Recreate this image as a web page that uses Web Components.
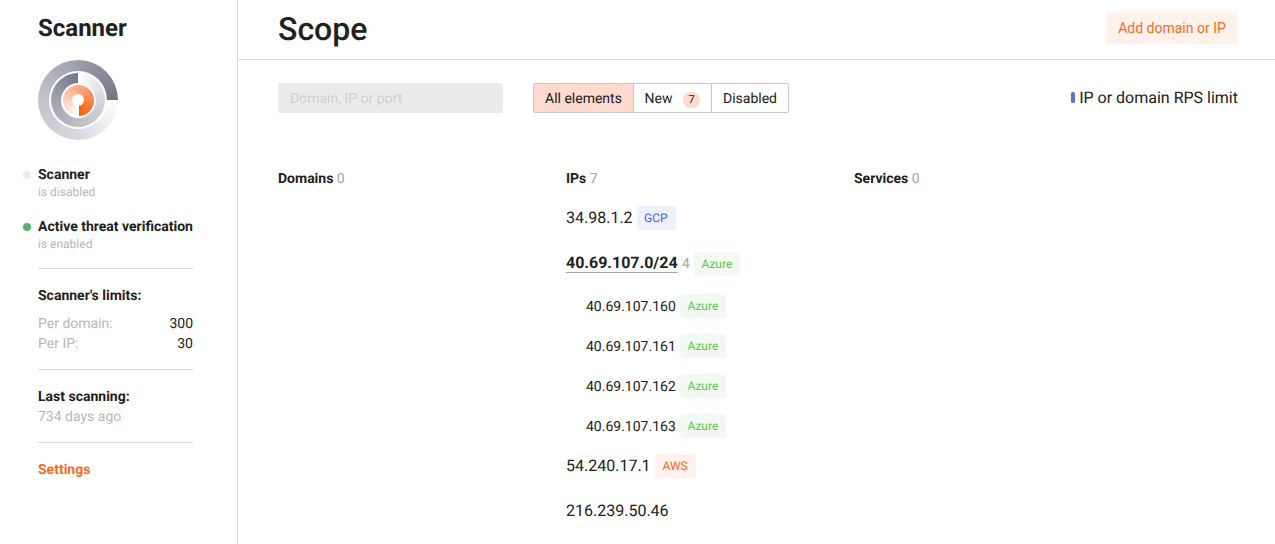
<!DOCTYPE html>
<html lang="en">
<head>
<meta charset="utf-8">
<title>Scope</title>
<style>
html,body{margin:0;height:100%;overflow:hidden;background:#fff}
body{font:14px/20px Roboto,"Liberation Sans",sans-serif;color:#212121;text-rendering:geometricPrecision;-webkit-font-smoothing:antialiased}
</style>
</head>
<body>
<scope-app></scope-app>
<script>
const define = (name, html) => {
  const tpl = document.createElement('template');
  tpl.innerHTML = '<style>*{box-sizing:border-box}:host{display:block;box-sizing:border-box}</style>' + html;
  customElements.define(name, class extends HTMLElement {
    constructor() {
      super();
      this.attachShadow({mode: 'open'}).append(tpl.content.cloneNode(true));
    }
  });
};

define('scanner-logo', `<style>
:host{width:80px;height:80px}
.ring{border-radius:50%;display:grid;place-items:center}
.o{width:80px;height:80px;background:conic-gradient(from 90deg,#fff,#d9dadf 25%,#c2c3cb 50%,#a5a6b3 70%,#747587)}
.m{width:54px;height:54px;background:conic-gradient(#fff,#d5d6dc 25%,#bdbec7 50%,#a1a2af 75%,#747587)}
.i{width:31px;height:31px;background:conic-gradient(from 180deg,#fff,#fcc3aa 33%,#fa9a6c 60%,#f4600c)}
.w{background:#fff}.w1{width:58px;height:58px}.w2{width:35px;height:35px}.w3{width:12px;height:12px}
</style><div class="ring o"><div class="ring w w1"><div class="ring m"><div class="ring w w2"><div class="ring i"><div class="ring w w3"></div></div></div></div></div></div>`);

define('status-line', `<style>
:host{position:relative;height:36px;margin-bottom:16px}
i{position:absolute;left:-15px;top:7px;width:8px;height:8px;border-radius:50%;background:var(--dot,#ebebeb)}
b{display:block;white-space:nowrap;padding-top:1px;margin-bottom:-1px}
small{display:block;font-size:12px;line-height:16px;color:#b8b8b8}
</style><i></i><b><slot></slot></b><small><slot name="state"></slot></small>`);

define('limit-row', `<style>
:host{display:flex;justify-content:space-between;color:#b8b8b8}
span{color:#212121}
</style><slot></slot><span><slot name="value"></slot></span>`);

define('scanner-sidebar', `<style>
:host{width:238px;height:544px;border-right:1px solid #d9d9d9;padding:12px 44px 0 38px}
h2{margin:0 0 16px;font-size:24px;line-height:32px;font-weight:700}
scanner-logo{margin-bottom:24px}
hr{border:0;height:1px;margin:0;background:#d9d9d9}
b{display:block}
.l{padding:17px 0 15px}
.l b{margin-bottom:8px}
.s{padding:17px 0 15px;color:#b8b8b8}
.s b{color:#212121}
a{display:block;padding-top:17px;color:#fa6a21;font-weight:700}
</style><h2>Scanner</h2><scanner-logo></scanner-logo>
<status-line>Scanner<span slot="state">is disabled</span></status-line>
<status-line style="--dot:#60ae6c">Active threat verification<span slot="state">is enabled</span></status-line>
<hr><div class="l"><b>Scanner's limits:</b><limit-row>Per domain:<span slot="value">300</span></limit-row><limit-row>Per IP:<span slot="value">30</span></limit-row></div>
<hr><div class="s"><b>Last scanning:</b>734 days ago</div>
<hr><a>Settings</a>`);

define('scope-header', `<style>
:host{display:flex;justify-content:space-between;align-items:flex-start;height:60px;padding:9px 37px 0 40px;border-bottom:1px solid #d9d9d9}
h1{margin:0;font-size:32px;line-height:40px;font-weight:500}
button{margin:3px 0 0;border:0;border-radius:4px;background:#fff2ec;color:#fa6a21;font:inherit;height:32px;width:132px;padding:0}
</style><h1>Scope</h1><button>Add domain or IP</button>`);

define('filter-tabs', `<style>
:host{display:flex;height:30px;border:1px solid #c8c8c8;border-radius:2px}
div{display:flex;line-height:28px;border-left:1px solid #c8c8c8;padding:1px 0 0 11px;white-space:nowrap}
.a{width:99px;border:0;background:#fddacd}.n{width:78px}.d{width:77px}
em{font-style:normal;font-size:11px;line-height:16px;width:17px;height:16px;margin:7px 0 0 auto;border-radius:8px;background:#fddacd;text-align:center}
.n{padding-left:10.5px;padding-right:11px}
</style><div class="a">All elements</div><div class="n">New<em>7</em></div><div class="d">Disabled</div>`);

define('scope-toolbar', `<style>
:host{display:flex;height:30px;margin:23px 37px 0 40px}
.f{width:225px;background:#ebebeb;border-radius:2px;color:#d0d0d0;padding:1px 0 0 12px;line-height:30px;margin-right:30px}
.r{margin-left:auto;display:flex;align-items:center;gap:4px;font-size:16px}
i{width:4px;height:11px;margin-bottom:1px;border-radius:1.5px;background:#5b73cb}
</style><div class="f">Domain, IP or port</div><filter-tabs></filter-tabs><div class="r"><i></i><span>IP or domain RPS limit</span></div>`);

define('cloud-tag', `<style>
:host{height:24px;border-radius:4px;font-size:12px;line-height:24px;padding-left:7.5px;background:#f2f9f1;color:#5cc65a;width:46px}
:host([kind=gcp]){background:#edf0fd;color:#4763e4;width:39px;padding-left:7px}
:host([kind=aws]){background:#fff2ec;color:#fa6a21;width:41px}
</style><slot></slot>`);

define('ip-row', `<style>
:host{display:flex;height:24px;line-height:24px;font-size:16px;margin-bottom:16px;white-space:nowrap}
:host([nested]){font-size:14px;padding-left:20px}
.t{width:var(--w)}
:host([nested]) .t{padding-top:1px}
:host([net]) .t{font-weight:700}
:host([net]) .t span{display:block;height:21px;line-height:22px;border-bottom:1px solid #a6a6a6}
.c{font-size:14px;color:#a6a6a6}
:host([net]) .c{width:12px;margin-left:4px}
</style><div class="t"><span><slot></slot></span></div><div class="c"><slot name="count"></slot></div><slot name="tag"></slot>`);

define('scope-column', `<style>
h3{margin:0 0 17px;padding-top:1px;font-size:14px;line-height:20px;font-weight:700}
h3 span{font-weight:400;color:#a6a6a6}
</style><h3><slot name="title"></slot> <span><slot name="count"></slot></span></h3><slot></slot>`);

define('scope-app', `<style>
:host{display:flex;height:544px;width:1275px}
main{flex:1}
.g{display:grid;grid-template-columns:288px 288px 1fr;margin:55px 0 0 40px}
</style><scanner-sidebar></scanner-sidebar><main><scope-header></scope-header><scope-toolbar></scope-toolbar>
<div class="g">
<scope-column><span slot="title">Domains</span><span slot="count">0</span></scope-column>
<scope-column><span slot="title">IPs</span><span slot="count">7</span>
<ip-row style="--w:71px;margin-bottom:22px">34.98.1.2<cloud-tag slot="tag" kind="gcp">GCP</cloud-tag></ip-row>
<ip-row net style="--w:112px;margin-bottom:18px">40.69.107.0/24<span slot="count">4</span><cloud-tag slot="tag">Azure</cloud-tag></ip-row>
<ip-row nested style="--w:94px">40.69.107.160<cloud-tag slot="tag">Azure</cloud-tag></ip-row>
<ip-row nested style="--w:94px">40.69.107.161<cloud-tag slot="tag">Azure</cloud-tag></ip-row>
<ip-row nested style="--w:94px">40.69.107.162<cloud-tag slot="tag">Azure</cloud-tag></ip-row>
<ip-row nested style="--w:94px">40.69.107.163<cloud-tag slot="tag">Azure</cloud-tag></ip-row>
<ip-row style="--w:89px;margin-bottom:21px">54.240.17.1<cloud-tag slot="tag" kind="aws">AWS</cloud-tag></ip-row>
<ip-row>216.239.50.46</ip-row>
</scope-column>
<scope-column><span slot="title">Services</span><span slot="count">0</span></scope-column>
</div></main>`);
</script>
</body>
</html>
